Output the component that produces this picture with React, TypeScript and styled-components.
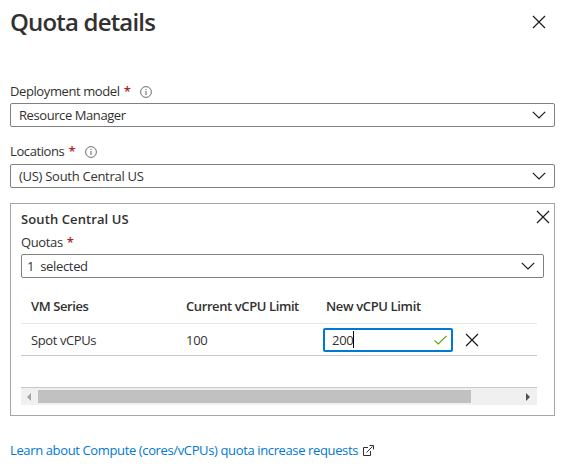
import React from "react";
import styled, { createGlobalStyle } from "styled-components";

const Global = createGlobalStyle`
  * { box-sizing: border-box; }
  body { margin: 0; background: #fff; overflow: hidden; }
`;

const Page = styled.main`
  width: 565px;
  height: 470px;
  padding: 0 10px;
  background: #fff;
  color: #323130;
  font: 13px/18px "Open Sans", "Noto Sans", sans-serif;
  svg { display: block; flex: none; }
`;

const Header = styled.header`
  display: flex;
  justify-content: space-between;
  height: 82px;
  padding: 6px 9px 0 0;
`;

const Title = styled.h1`
  margin: 0;
  font-size: 24px;
  line-height: 32px;
  font-weight: 600;
`;

const IconButton = styled.button<{ $top?: number; $left?: number }>`
  display: block;
  width: 14px;
  height: 14px;
  margin: ${(p) => p.$top ?? 0}px 0 0 ${(p) => p.$left ?? 0}px;
  padding: 0;
  border: 0;
  background: none;
`;

const Label = styled.div<{ $height: number; $bottom?: number }>`
  display: flex;
  align-items: flex-end;
  height: ${(p) => p.$height}px;
  padding-bottom: ${(p) => p.$bottom ?? 3}px;
  svg { margin-bottom: 2px; }
`;

const Text = styled.span<{ $spacing?: number; $bold?: boolean }>`
  white-space: pre;
  letter-spacing: ${(p) => p.$spacing ?? -0.37}px;
  font-weight: ${(p) => (p.$bold ? 600 : 400)};
`;

const Required = styled.span`
  margin: 0 9px 0 4px;
  color: #a4262c;
  font-weight: 600;
`;

const Select = styled.div<{ $inset?: number }>`
  display: flex;
  align-items: center;
  justify-content: space-between;
  height: 24px;
  padding: 0 8px 0 ${(p) => p.$inset ?? 8}px;
  border: 1px solid #808080;
  border-radius: 2px;
`;

const Panel = styled.section`
  height: 213px;
  margin-top: 15px;
  padding: 0 10px;
  border: 1px solid #a6a6a6;
`;

const PanelHeader = styled.div`
  display: flex;
  justify-content: space-between;
  height: 29px;
  margin-right: -6px;
  padding-top: 6px;
`;

const Table = styled.div`
  width: 516px;
  margin-top: 13px;
`;

const Row = styled.div<{ $head?: boolean }>`
  display: grid;
  grid-template-columns: 155px 137px 130px auto;
  align-items: center;
  height: ${(p) => (p.$head ? 33 : 32)}px;
  padding-left: 10px;
  padding-bottom: ${(p) => (p.$head ? 2 : 0)}px;
  border-bottom: 1px solid ${(p) => (p.$head ? "#e6e6e6" : "#c8c8c8")};
`;

const HeadCell = styled.div`
  padding-left: 3px;
  &:first-child, &:nth-child(2) { padding-left: 0; }
`;

const Input = styled.div`
  display: flex;
  align-items: center;
  height: 24px;
  padding: 0 4px 0 7px;
  border: 2px solid #0078d4;
  border-radius: 2px;
`;

const Caret = styled.span`
  width: 1px;
  height: 17px;
  margin-right: auto;
  background: #000;
`;

const ScrollBar = styled.div`
  display: flex;
  align-items: center;
  width: 516px;
  height: 18px;
  margin-top: 31px;
  border-top: 1px solid #c8c8c8;
  background: #f0f0f0;
`;

const ScrollThumb = styled.div`
  width: 433px;
  height: 13px;
  margin-right: auto;
  background: #c1c1c1;
`;

const ScrollArrow = styled.span`
  display: flex;
  width: 17px;
  padding-left: 6px;
`;

const Link = styled.a`
  display: flex;
  align-items: center;
  gap: 5px;
  margin-top: 25px;
  color: #0078d4;
`;

const Cross = () => (
  <svg width="14" height="14" viewBox="0 0 14 14" fill="none" stroke="#1b1a19" strokeWidth="1.2">
    <path d="M1 1 13 13M13 1 1 13" />
  </svg>
);

const Chevron = () => (
  <svg width="14" height="8" viewBox="0 0 14 8" fill="none" stroke="#1b1a19" strokeWidth="1.2">
    <path d="M.8.8 7 7 13.2.8" />
  </svg>
);

const Info = () => (
  <svg width="12" height="12" viewBox="0 0 12 12" fill="none" stroke="#605e5c">
    <circle cx="6" cy="6" r="5.4" strokeWidth=".9" />
    <path d="M6 5v4M6 3v1" />
  </svg>
);

const Check = () => (
  <svg width="13" height="10" viewBox="0 0 13 10" fill="none" stroke="#57a300" strokeWidth="1.1">
    <path d="M.5 5.3 4.2 9 12.5.8" />
  </svg>
);

const External = () => (
  <svg width="11" height="11" viewBox="0 0 11 11" fill="none" stroke="#323130">
    <path d="M5 2.5H.5v8h7V6M3.5 7.5l6-6M6.5.5h4v4" />
  </svg>
);

export default function App() {
  return (
    <Page>
      <Global />
      <Header>
        <Title><Text $bold $spacing={-0.82}>Quota details</Text></Title>
        <IconButton $top={9} aria-label="Close"><Cross /></IconButton>
      </Header>

      <Label $height={21}>
        <Text $spacing={-0.4}>Deployment model</Text><Required>*</Required><Info />
      </Label>
      <Select><Text $spacing={-0.42}>Resource Manager</Text><Chevron /></Select>

      <Label $height={37} $bottom={4}>
        <Text $spacing={-0.4}>Locations</Text><Required>*</Required><Info />
      </Label>
      <Select><Text $spacing={-0.28}>(US) South Central US</Text><Chevron /></Select>

      <Panel>
        <PanelHeader>
          <Text $bold $spacing={0.1}>South Central US</Text>
          <IconButton aria-label="Remove location"><Cross /></IconButton>
        </PanelHeader>
        <Label $height={21}><Text>Quotas</Text><Required>*</Required></Label>
        <Select $inset={5}><Text $spacing={-0.33}>1  selected</Text><Chevron /></Select>
        <Table>
          <Row $head>
            <HeadCell><Text $bold $spacing={-0.4}>VM Series</Text></HeadCell>
            <HeadCell><Text $bold $spacing={-0.4}>Current vCPU Limit</Text></HeadCell>
            <HeadCell><Text $bold $spacing={-0.36}>New vCPU Limit</Text></HeadCell>
          </Row>
          <Row>
            <Text $spacing={-0.4}>Spot vCPUs</Text>
            <Text $spacing={-0.3}>100</Text>
            <Input><Text $spacing={-0.3}>200</Text><Caret /><Check /></Input>
            <IconButton $left={12} aria-label="Remove quota"><Cross /></IconButton>
          </Row>
        </Table>
        <ScrollBar>
          <ScrollArrow><svg width="4" height="8"><path d="M4 0v8L0 4z" fill="#a3a3a3" /></svg></ScrollArrow>
          <ScrollThumb />
          <ScrollArrow><svg width="4" height="8"><path d="M0 0v8l4-4z" fill="#505050" /></svg></ScrollArrow>
        </ScrollBar>
      </Panel>
      <Link><Text>Learn about Compute (cores/vCPUs) quota increase requests</Text><External /></Link>
    </Page>
  );
}
